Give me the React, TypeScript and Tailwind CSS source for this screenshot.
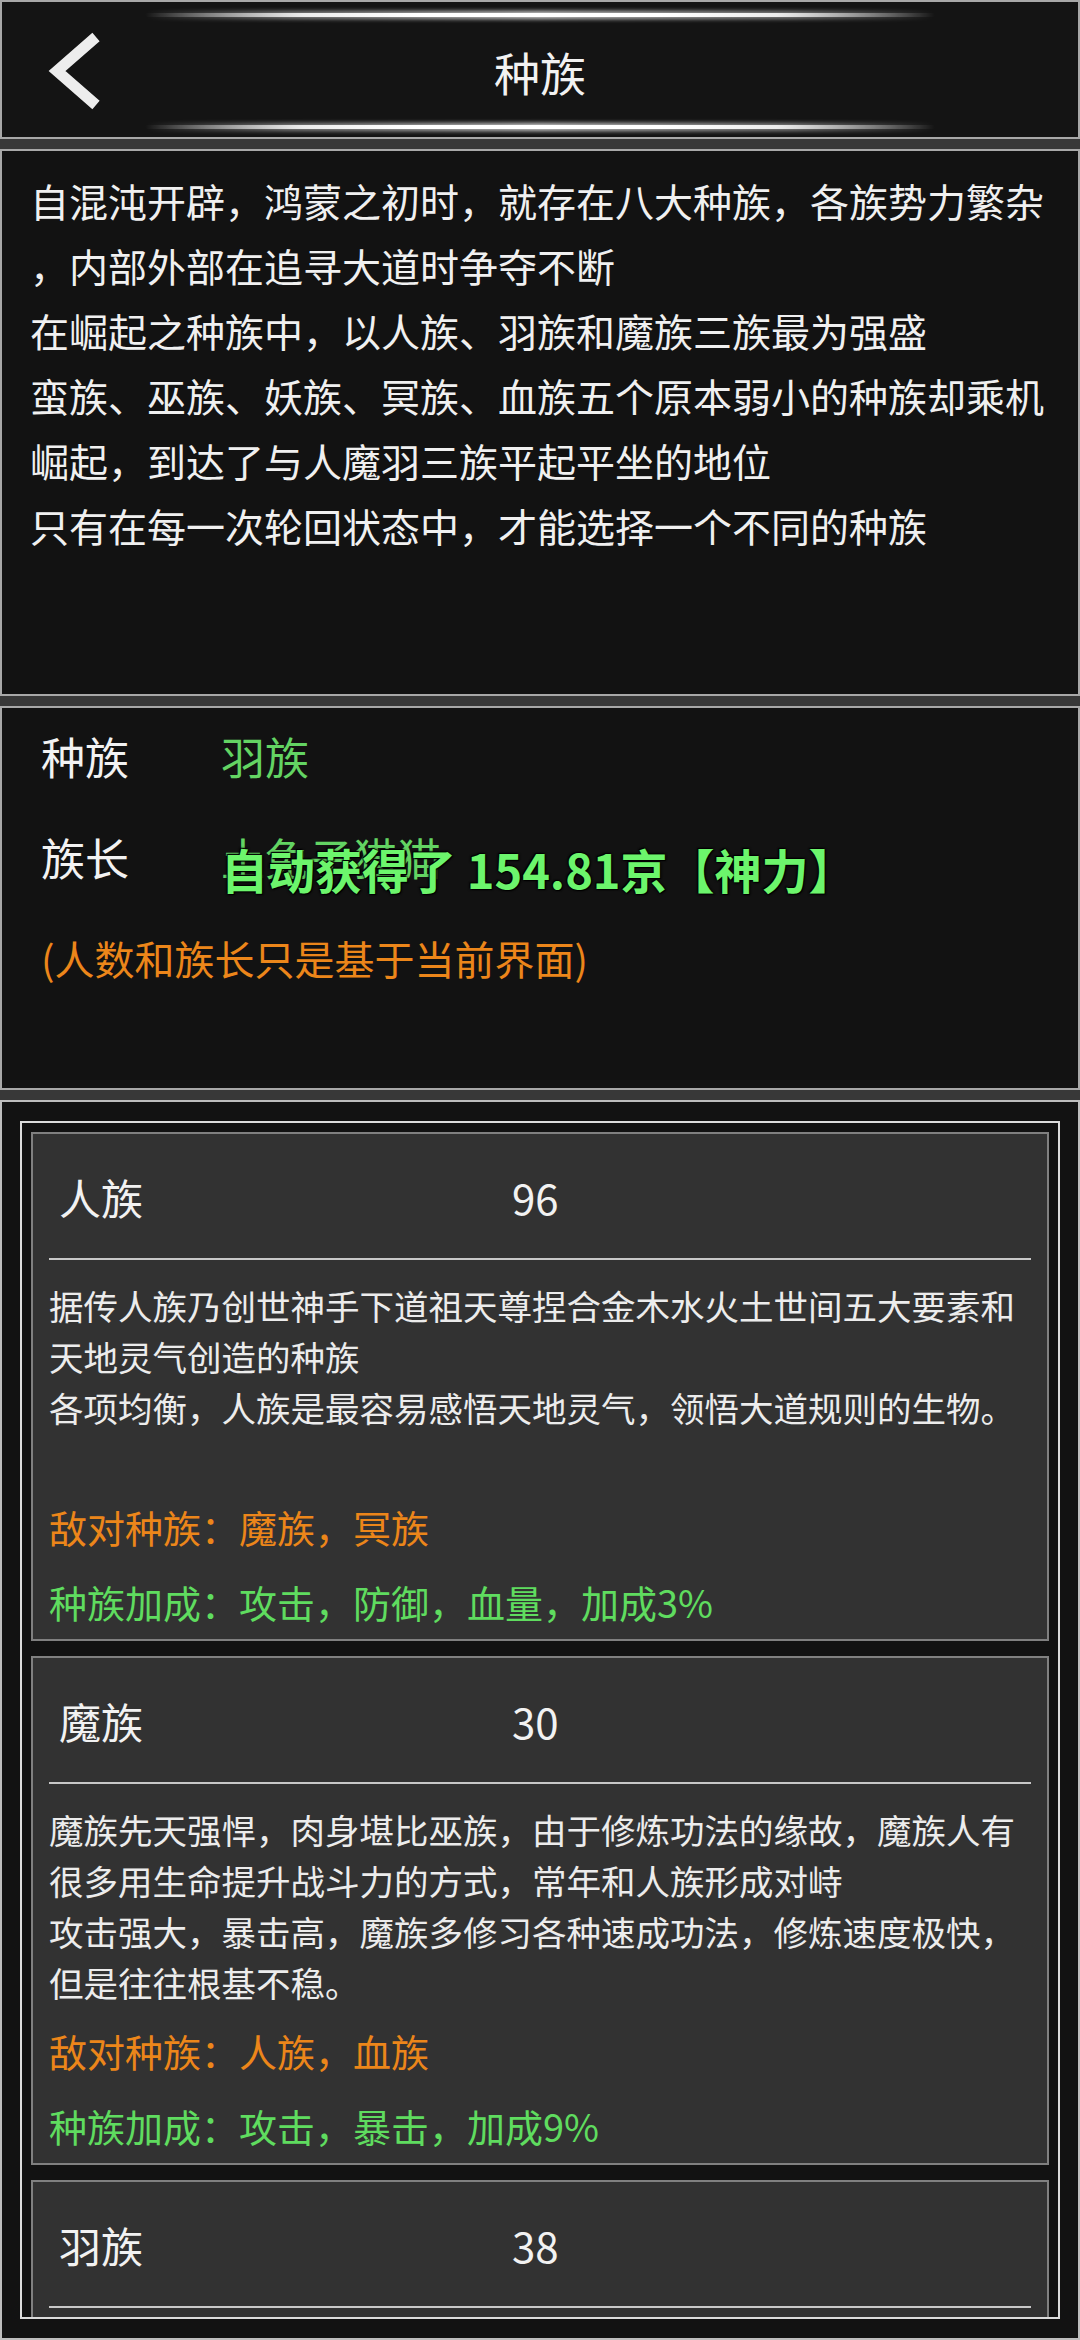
import React from 'react';

type Race = {
  name: string;
  count: number;
  desc: string[];
  enemy: string;
  bonus: string;
};

const intro = [
  '自混沌开辟，鸿蒙之初时，就存在八大种族，各族势力繁杂',
  '，内部外部在追寻大道时争夺不断',
  '在崛起之种族中，以人族、羽族和魔族三族最为强盛',
  '蛮族、巫族、妖族、冥族、血族五个原本弱小的种族却乘机',
  '崛起，到达了与人魔羽三族平起平坐的地位',
  '只有在每一次轮回状态中，才能选择一个不同的种族',
];

const races: Race[] = [
  {
    name: '人族',
    count: 96,
    desc: [
      '据传人族乃创世神手下道祖天尊捏合金木水火土世间五大要素和',
      '天地灵气创造的种族',
      '各项均衡，人族是最容易感悟天地灵气，领悟大道规则的生物。',
      '',
    ],
    enemy: '敌对种族：魔族，冥族',
    bonus: '种族加成：攻击，防御，血量，加成3%',
  },
  {
    name: '魔族',
    count: 30,
    desc: [
      '魔族先天强悍，肉身堪比巫族，由于修炼功法的缘故，魔族人有',
      '很多用生命提升战斗力的方式，常年和人族形成对峙',
      '攻击强大，暴击高，魔族多修习各种速成功法，修炼速度极快，',
      '但是往往根基不稳。',
    ],
    enemy: '敌对种族：人族，血族',
    bonus: '种族加成：攻击，暴击，加成9%',
  },
  {
    name: '羽族',
    count: 38,
    desc: ['羽族身轻如燕，天生亲近风灵之气', '身法迅捷，闪避极高。', '', ''],
    enemy: '敌对种族：蛮族，妖族',
    bonus: '种族加成：闪避，速度，加成6%',
  },
];

const Glow: React.FC = () => (
  <div className="relative flex h-[12px] w-[790px] items-center justify-center">
    <div className="absolute inset-x-0 top-[2px] h-[8px] rounded-full bg-[linear-gradient(to_right,transparent,rgba(255,255,255,0.45)_18%,rgba(255,255,255,0.8)_50%,rgba(255,255,255,0.45)_82%,transparent)] blur-[2px]" />
    <div className="relative h-[4px] w-full rounded-full bg-[linear-gradient(to_right,transparent,rgba(255,255,255,0.85)_20%,#ffffff_35%,#ffffff_65%,rgba(255,255,255,0.85)_80%,transparent)]" />
  </div>
);

const RaceCard: React.FC<{ race: Race }> = ({ race }) => (
  <div className="shrink-0 border-2 border-[#808080] bg-[#323232]">
    <div className="flex h-[124px] items-center pl-[26px] text-[42px] text-[#f2f2f2]">
      <span className="w-[453px]">{race.name}</span>
      <span>{race.count}</span>
    </div>
    <div className="mx-[16px] h-[2px] bg-[#c8c8c8]" />
    <div className="mx-[16px] mt-[20px] text-[34.5px] leading-[51px] text-[#ececec]">
      {race.desc.map((line, i) => (
        <div key={i} className="h-[51px] whitespace-nowrap">
          {line}
        </div>
      ))}
    </div>
    <div className="mx-[16px] mt-[5px] text-[38px] leading-[75px]">
      <div className="text-[#ec861a]">{race.enemy}</div>
      <div className="text-[#5fdc5f]">{race.bonus}</div>
    </div>
  </div>
);

const App: React.FC = () => {
  return (
    <div className="flex h-[2340px] w-[1080px] flex-col gap-[10px] overflow-hidden bg-[#383838] font-['Noto_Sans_CJK_SC','Noto_Sans',sans-serif]">
      {/* Header */}
      <div className="flex h-[139px] shrink-0 flex-col items-center border-2 border-[#a8a8a8] bg-[#141414]">
        <div className="mt-[7px]">
          <Glow />
        </div>
        <div className="flex w-full flex-1 items-center">
          <div className="flex w-[140px] items-center pl-[40px]">
            <svg width="60" height="80" viewBox="0 0 60 80">
              <polyline
                points="54,6 15,40 54,74"
                fill="none"
                stroke="#ededed"
                strokeWidth="11"
                strokeLinejoin="miter"
              />
            </svg>
          </div>
          <div className="flex-1 text-center text-[46px] leading-none text-[#f2f2f2]">种族</div>
          <div className="w-[140px]" />
        </div>
        <div className="mb-[4px]">
          <Glow />
        </div>
      </div>

      {/* Intro */}
      <div className="h-[547px] shrink-0 border-2 border-[#a8a8a8] bg-[#121212] pl-[28px] pt-[17px] text-[39px] leading-[65px] text-[#f0f0f0]">
        {intro.map((line, i) => (
          <div key={i} className="whitespace-nowrap">
            {line}
          </div>
        ))}
      </div>

      {/* Info */}
      <div className="flex h-[384px] shrink-0 flex-col gap-[41px] border-2 border-[#a8a8a8] bg-[#121212] pl-[39px] pt-[18px]">
        <div className="flex h-[60px] items-center text-[44px] leading-[60px]">
          <span className="w-[180px] text-[#f2f2f2]">种族</span>
          <span className="text-[#63d463]">羽族</span>
        </div>
        <div className="flex h-[60px] items-center text-[44px] leading-[60px]">
          <span className="w-[180px] text-[#f2f2f2]">族长</span>
          <span className="relative text-[#63d463]">
            土兔子猫猫
            <span className="absolute left-0 top-[12px] whitespace-nowrap text-[47px] font-bold leading-[60px] text-[#6cf56c] [text-shadow:0_0_3px_#000,0_0_2px_#000,1px_1px_1px_#000,-1px_-1px_1px_#000]">
              自动获得了 154.81京【神力】
            </span>
          </span>
        </div>
        <div className="h-[60px] text-[40px] leading-[60px] text-[#ec861a]">(人数和族长只是基于当前界面)</div>
      </div>

      {/* Race list */}
      <div className="flex min-h-0 flex-1 flex-col border-2 border-[#bdbdbd] bg-[#121212] px-[18px] pb-[19px] pt-[19px]">
        <div className="flex min-h-0 flex-1 flex-col gap-[15px] overflow-hidden border-2 border-[#dcdcdc] px-[9px] pt-[9px]">
          {races.map((race) => (
            <RaceCard key={race.name} race={race} />
          ))}
        </div>
      </div>
    </div>
  );
};

export default App;
